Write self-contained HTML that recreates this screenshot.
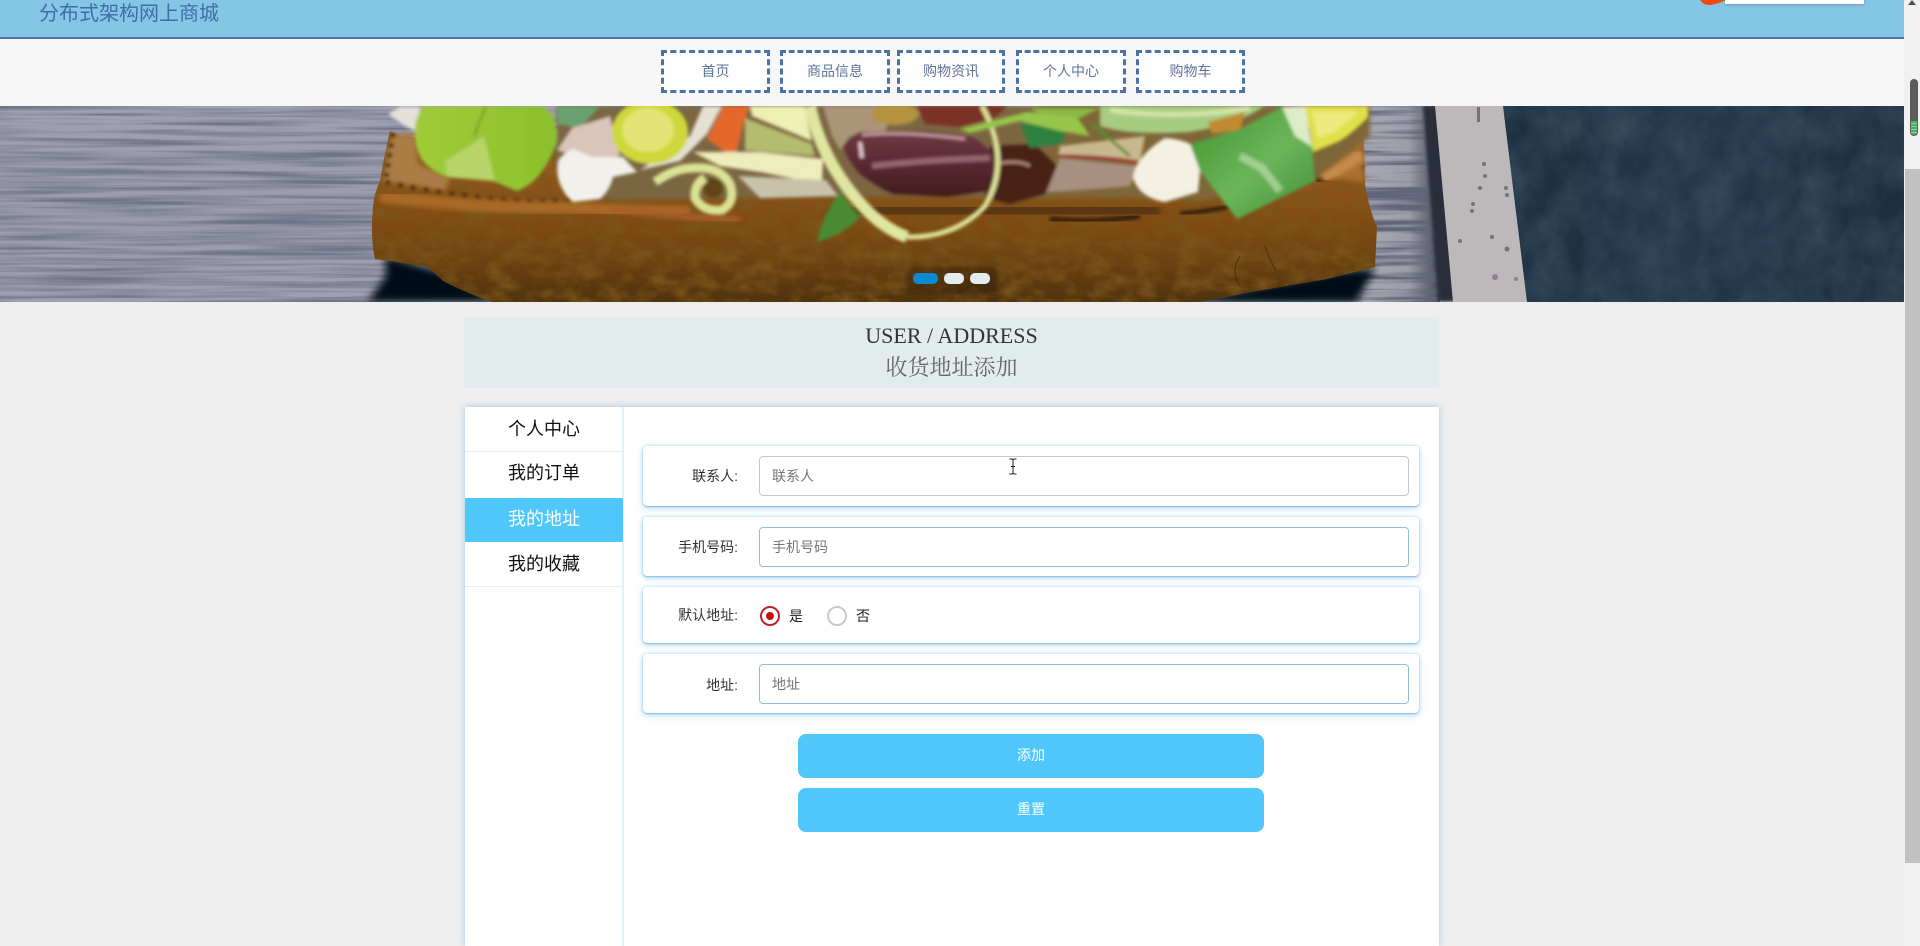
<!DOCTYPE html>
<html lang="zh-CN">
<head>
<meta charset="utf-8">
<title>收货地址添加</title>
<style>
html,body{margin:0;padding:0;width:1920px;height:946px;overflow:hidden;background:#eeeeee;font-family:"Liberation Sans","Noto Sans CJK SC",sans-serif;color:#333}
*{box-sizing:border-box}
#page{position:relative;width:1920px;height:946px;overflow:hidden}
.a{position:absolute}
#hdr{left:0;top:0;width:1904px;height:39px;background:#85c5e6;border-bottom:2px solid #4a78ad}
#hdr .t{position:absolute;left:39px;top:0;font-size:20px;line-height:28px;color:#3f6ea6;white-space:nowrap}
#nav{left:0;top:39px;width:1904px;height:67px;background:#f6f6f6}
.n{position:absolute;top:50px;height:43px;border:3px dashed #4a72a5;background:#fdfdfd;color:#5f7499;font-size:14px;line-height:37px;text-align:center;white-space:nowrap}
#band{left:464px;top:317px;width:975px;height:71px;background:#e2ecec;text-align:center;font-family:"Liberation Serif","Noto Serif CJK SC",serif;font-size:22px;line-height:31px;padding-top:3px}
#band div:first-child{color:#333}
#band div:last-child{color:#666;margin-top:1px}
#card{left:465px;top:407px;width:974px;height:539px;background:#fff;box-shadow:0 0 6px rgba(110,180,225,.65)}
#side{left:465px;top:407px;width:159px;height:539px;background:#fff;border-right:2px solid #e3f2fa}
.m{position:absolute;left:465px;width:158px;height:45px;text-align:center;font-size:18px;line-height:43px;color:#111;border-bottom:1px solid #e8eef0}
.r{position:absolute;left:643px;width:776px;background:#fff;border-radius:4px;box-shadow:0 1px 1px #8dc0dd,0 2px 7px rgba(120,190,230,.55),0 0 3px rgba(120,190,230,.45)}
.l{position:absolute;left:642px;width:96px;text-align:right;font-size:14px;line-height:20px;color:#333;white-space:nowrap}
.i{position:absolute;left:759px;width:650px;height:40px;background:#fff;border:1px solid #90bcd8;border-radius:4px;font-size:14px;line-height:39px;padding-left:12px;color:#757575}
.c{position:absolute;top:606px;width:20px;height:20px;border-radius:50%;background:#fff}
.v{position:absolute;top:605px;font-size:14px;line-height:22px;color:#222}
.b{position:absolute;left:798px;width:466px;height:44px;background:#4fc7fa;border-radius:8px;color:#fff;font-size:14px;text-align:center;line-height:43px}
</style>
</head>
<body>
<div id="page">
<div class="a" id="hdr"><div class="t">分布式架构网上商城</div>
<div class="a" style="left:1725px;top:-4px;width:139px;height:8px;background:#fff;box-shadow:0 1px 2px rgba(90,110,130,.5)"></div>
<svg class="a" style="left:1699px;top:0" width="28" height="6"><path d="M1 0Q4 5 11 5Q19 4 27 0Z" fill="#f04a10"/></svg>
</div>
<div class="a" id="nav"></div>
<div class="n" style="left:661px;width:109px">首页</div>
<div class="n" style="left:780px;width:110px">商品信息</div>
<div class="n" style="left:897px;width:108px">购物资讯</div>
<div class="n" style="left:1016px;width:110px">个人中心</div>
<div class="n" style="left:1136px;width:109px">购物车</div>

<svg class="a" style="left:0;top:106px" width="1904" height="196" viewBox="0 0 1904 196">
<defs>
<filter id="wood" x="0" y="0" width="100%" height="100%">
<feTurbulence type="fractalNoise" baseFrequency="0.005 0.2" numOctaves="3" seed="4"/>
<feColorMatrix values="0 0 0 0 .16  0 0 0 0 .17  0 0 0 0 .24  2.6 0 0 0 -1"/>
</filter>
<filter id="wood2" x="0" y="0" width="100%" height="100%">
<feTurbulence type="fractalNoise" baseFrequency="0.006 0.16" numOctaves="3" seed="12"/>
<feColorMatrix values="0 0 0 0 .12  0 0 0 0 .13  0 0 0 0 .19  3.4 0 0 0 -1.3"/>
</filter>
<filter id="denim" x="0" y="0" width="100%" height="100%">
<feTurbulence type="fractalNoise" baseFrequency="0.03 0.025" numOctaves="4" seed="9"/>
<feColorMatrix values="0 0 0 0 .05  0 0 0 0 .09  0 0 0 0 .13  1.1 0 0 0 -.3"/>
</filter>
<filter id="crumb" x="0" y="0" width="100%" height="100%">
<feTurbulence type="fractalNoise" baseFrequency="0.045 0.07" numOctaves="3" seed="3"/>
<feColorMatrix values="0 0 0 0 .2  0 0 0 0 .09  0 0 0 0 .01  2 0 0 0 -.75"/>
<feComposite operator="in" in2="SourceAlpha"/>
</filter>
<filter id="b1" x="-5%" y="-5%" width="110%" height="110%"><feGaussianBlur stdDeviation="1.700"/></filter>
<filter id="b2"><feGaussianBlur stdDeviation="2.500"/></filter>
<filter id="b4"><feGaussianBlur stdDeviation="4"/></filter>
<linearGradient id="w" x1="0" y1="0" x2="0" y2="1"><stop offset="0" stop-color="#9fa1b2"/><stop offset=".6" stop-color="#9a9bae"/><stop offset="1" stop-color="#a0a0b2"/></linearGradient>
<linearGradient id="w2" x1="0" y1="0" x2="1" y2="0"><stop offset="0" stop-color="#a8a9b4"/><stop offset=".6" stop-color="#9c9da8"/><stop offset="1" stop-color="#454855"/></linearGradient>
<linearGradient id="br" x1="0" y1="0" x2="0" y2="1"><stop offset="0" stop-color="#9a6426"/><stop offset=".5" stop-color="#824c14"/><stop offset=".72" stop-color="#704412"/><stop offset="1" stop-color="#4f330e"/></linearGradient>
<linearGradient id="dn" x1="0" y1="0" x2="1" y2="0"><stop offset="0" stop-color="#1b2f40"/><stop offset=".5" stop-color="#22374a"/><stop offset="1" stop-color="#1c2f3f"/></linearGradient>
<linearGradient id="ol" x1="0" y1="0" x2="0" y2="1"><stop offset="0" stop-color="#6e3a45"/><stop offset=".45" stop-color="#5c2a35"/><stop offset="1" stop-color="#421c1c"/></linearGradient>
<linearGradient id="fv" x1="0" y1="0" x2="1" y2="0"><stop offset="0" stop-color="#a0cb3a"/><stop offset="1" stop-color="#8cc02c"/></linearGradient>
<linearGradient id="lf" x1="0" y1="0" x2="1" y2="1"><stop offset="0" stop-color="#3f962f"/><stop offset=".55" stop-color="#6cb45a"/><stop offset="1" stop-color="#3f9036"/></linearGradient>
</defs>

<!-- table / wood -->
<rect width="1370" height="196" fill="url(#w)"/>
<rect width="1370" height="196" filter="url(#wood)"/>
<rect x="1362" y="0" width="78" height="196" fill="url(#w2)"/>
<rect x="1362" y="0" width="78" height="196" filter="url(#wood2)"/>

<!-- denim -->
<rect x="1495" width="409" height="196" fill="url(#dn)"/>
<rect x="1495" width="409" height="196" filter="url(#denim)"/>

<!-- knife -->
<path d="M1423 0H1438L1456 196H1438Z" fill="#2c2f3b" filter="url(#b1)"/>
<path d="M1435 0H1503L1527 196H1453Z" fill="#bdb9ba"/>
<g fill="#5f5a66" opacity=".75">
<rect x="1477" y="1" width="3" height="15"/>
<circle cx="1484" cy="58" r="2"/><circle cx="1485" cy="70" r="2"/><circle cx="1480" cy="82" r="2"/><circle cx="1506" cy="82" r="2"/><circle cx="1507" cy="89" r="2"/><circle cx="1473" cy="98" r="2"/><circle cx="1472" cy="105" r="2"/><circle cx="1460" cy="135" r="2"/><circle cx="1492" cy="131" r="2"/><circle cx="1507" cy="143" r="2.500"/><circle cx="1495" cy="171" r="3" fill="#8a6880"/><circle cx="1516" cy="173" r="2" fill="#8a6880"/>
</g>

<!-- shadows beneath bread -->
<path d="M385 150L440 165L500 196H368L386 170Z" fill="#050812" filter="url(#b4)"/>
<path d="M1180 196L1340 165L1376 162L1356 196Z" fill="#050816" filter="url(#b4)"/>

<!-- bread -->
<path d="M390 25Q384 50 380 75Q374 88 373 101Q370 130 375 153Q402 156 427 161Q436 168 443 175Q468 188 493 196H1200Q1225 192 1240 188L1327 173L1375 161L1377 121Q1368 100 1365 78L1363 25Q1300 30 1200 60L800 60L400 30Z" fill="url(#br)"/>
<path d="M390 25Q384 50 380 75Q374 88 373 101Q370 130 375 153Q402 156 427 161Q436 168 443 175Q468 188 493 196H1200Q1225 192 1240 188L1327 173L1375 161L1377 121Q1368 100 1365 78L1363 25Q1300 30 1200 60L800 60L400 30Z" filter="url(#crumb)"/>
<!-- toast surface left -->
<path d="M392 28L383 75Q420 80 445 85L450 72L418 58L415 28Z" fill="#ab7c45" filter="url(#b2)"/>
<g fill="none" stroke="#2e1a0c" filter="url(#b1)">
<path d="M393 28L386 72" stroke-width="4" stroke-dasharray="3 7"/>
<path d="M386 76Q420 84 470 90Q520 98 570 94" stroke-width="3" stroke-dasharray="4 9"/>
</g>
<!-- crust -->
<path d="M380 90Q470 102 575 102Q640 106 690 106" fill="none" stroke="#b06e2c" stroke-width="12" opacity=".85" filter="url(#b2)"/>
<path d="M760 106H825" fill="none" stroke="#b87838" stroke-width="24" opacity=".9" filter="url(#b4)"/>
<path d="M610 102Q660 110 740 114" fill="none" stroke="#a85f2c" stroke-width="6" filter="url(#b2)"/>
<path d="M830 107Q1000 110 1160 102" fill="none" stroke="#5a3712" stroke-width="26" filter="url(#b4)"/>
<path d="M1050 113Q1090 118 1140 110" fill="none" stroke="#3a2010" stroke-width="6" filter="url(#b1)"/>
<path d="M1152 106H1182" fill="none" stroke="#1c1820" stroke-width="8" filter="url(#b1)"/>
<path d="M1180 108Q1210 105 1230 100" fill="none" stroke="#3a2410" stroke-width="5" filter="url(#b1)"/>
<path d="M1316 75L1364 60" fill="none" stroke="#3a2410" stroke-width="4" filter="url(#b1)"/>
<path d="M1318 32L1362 28L1364 76L1320 70Z" fill="#a87030" filter="url(#b2)"/>
<path d="M1322 72Q1345 60 1362 48" fill="none" stroke="#c88a4a" stroke-width="12" filter="url(#b2)"/>
<path d="M1240 150Q1230 165 1240 180M1265 140Q1270 155 1276 165" fill="none" stroke="#3c2408" stroke-width="1.500" opacity=".5"/>

<!-- background topping fill -->
<path d="M557 0H1100V50L1050 92L830 90L620 94Q560 90 555 50Z" fill="#7c6642" filter="url(#b2)"/>
<path d="M1040 0H1370V30L1320 70L1200 95L1130 92L1050 92Z" fill="#7f6638" filter="url(#b2)"/>

<g filter="url(#b1)">
<!-- left pale bit -->
<path d="M388 8L400 1H420L417 26L405 20Z" fill="#e4e0da"/>
<!-- fava bean -->
<path d="M423 0Q413 15 415 31Q416 45 423 55Q432 66 447 71L493 75Q505 80 517 85Q530 80 540 68Q552 52 557 35Q557 18 552 8L542 0Z" fill="url(#fv)"/>
<path d="M447 71L445 55Q470 40 484 30L495 75Z" fill="#b8d468"/>
<path d="M486 0L474 30" stroke="#5f8a22" stroke-width="1.500" fill="none"/>
<!-- herb + pink slice -->
<path d="M557 0H600L580 22L557 18Z" fill="#6aa070"/>
<path d="M572 22L610 10L620 50L590 56L557 44Z" fill="#d9c5ba"/>
<!-- cream crescent behind yellow slice -->
<path d="M703 0H722L707 28L680 55L640 64L690 30Z" fill="#e6e0d2"/>
<!-- cheese -->
<path d="M573 43Q562 48 558 55Q556 68 560 78Q565 90 573 96L600 93Q610 84 613 71L637 66L623 51L593 51Z" fill="#f2f0ea"/>
<!-- yellow slice -->
<ellipse cx="650" cy="26" rx="38" ry="32" fill="#cdd83a"/>
<ellipse cx="648" cy="24" rx="26" ry="22" fill="#e0e474"/>
<!-- carrot -->
<path d="M723 0H750L743 18L735 53L707 33Z" fill="#e4682a"/>
<!-- celery -->
<path d="M750 0H804L812 35L752 10Z" fill="#eef0b4"/>
<path d="M745 12L812 38L815 50L745 44Z" fill="#b4bc6e"/>
<!-- pale strip -->
<path d="M693 46L760 46L823 53L822 78L760 66L720 60Z" fill="#eeeebc"/>
<path d="M738 70L826 74L838 90L760 92Z" fill="#c9c2ab"/>
<!-- tan bits -->
<path d="M823 0H895L885 26L850 30L840 44L832 30Z" fill="#ab9478"/>
<ellipse cx="895" cy="8" rx="24" ry="11" fill="#b39340"/>
<path d="M917 0H1007L995 12L960 21L925 18Z" fill="#7a3028"/>
<!-- ring -->
<ellipse cx="713" cy="82" rx="10" ry="10" fill="#5e4516"/>
<path d="M655 76Q675 62 693 62Q720 60 730 78Q736 96 722 104Q703 106 695 92Q694 78 705 72" fill="none" stroke="#dae294" stroke-width="9"/>
<!-- second olive -->
<path d="M990 40L1035 38L1057 60L1045 88L1010 98L985 92Z" fill="#4a2418"/>
<path d="M1000 57Q1020 54 1030 60" stroke="#b08878" stroke-width="3" fill="none"/>
<!-- olive -->
<path d="M843 41Q850 30 860 26L927 25L973 31Q990 42 997 55Q995 72 987 85L947 91L893 88Q875 80 860 68Q848 55 843 41Z" fill="url(#ol)"/>
<path d="M862 29Q905 25 965 33" stroke="#c49aa2" stroke-width="3" fill="none"/>
<path d="M872 60Q925 54 990 52" stroke="#a87a82" stroke-width="6" fill="none" opacity=".75"/>
<path d="M860 36L862 52" stroke="#e0c4c8" stroke-width="4" fill="none"/>
<!-- small leaf -->
<path d="M840 86Q822 110 817 136Q845 128 860 111Z" fill="#4a8a30"/>
<!-- ribbon -->
<path d="M810 0Q822 55 860 97Q882 122 907 131" fill="none" stroke="#dfe6a0" stroke-width="12"/>
<path d="M907 131Q955 132 985 100Q1012 55 982 0" fill="none" stroke="#dde29a" stroke-width="5"/>
<!-- radish -->
<path d="M1060 40L1145 30L1140 55L1058 50Z" fill="#c8b88e"/>
<path d="M1047 86L1060 52L1137 60L1130 80Q1090 84 1047 86Z" fill="#a89080"/>
<path d="M1058 50Q1100 50 1138 56" stroke="#a02828" stroke-width="3" fill="none"/>
<!-- micro greens -->
<path d="M1020 18L1068 20L1062 38L1030 42Z" fill="#2f8040"/>
<path d="M960 23L1027 6L1077 11L1090 30L1060 25L1020 15L970 27Z" fill="#96c648"/>
<path d="M1030 2H1100L1080 12L1040 8Z" fill="#8ab844"/>
<path d="M1092 18L1130 50" stroke="#5a9030" stroke-width="3" fill="none"/>
<!-- bright ring -->
<path d="M1100 0H1264Q1240 18 1190 26Q1130 30 1100 20Z" fill="#a6cc82"/>
<path d="M1110 4Q1180 14 1250 2" stroke="#d4e4aa" stroke-width="5" fill="none"/>
<!-- tan near leaf -->
<path d="M1208 16L1245 6L1240 24L1212 28Z" fill="#c08a30"/>
<!-- lime -->
<path d="M1303 0H1368V11Q1355 25 1340 35L1313 46L1310 25Z" fill="#dfe04c"/>
<path d="M1312 6H1358L1335 26L1318 32Z" fill="#f0e97e"/>
<!-- big leaf -->
<path d="M1190 38L1200 65L1237 113L1315 75L1312 41L1282 1L1240 23Z" fill="url(#lf)"/>
<path d="M1282 1L1305 0L1312 41L1295 30Z" fill="#dcecc8"/>
<path d="M1240 50L1262 62L1280 85" stroke="#c0e0b0" stroke-width="8" fill="none" opacity=".65"/>
<!-- cheese -->
<path d="M1165 32Q1180 33 1190 38L1200 65L1198 86L1165 96Q1140 92 1133 72Q1136 50 1165 32Z" fill="#f4f1e2"/>
</g>

<!-- indicator -->
<rect x="907" y="161" width="90" height="27" rx="7" fill="#000" opacity=".22" filter="url(#b1)"/>
<rect x="913" y="167" width="25" height="11" rx="5" fill="#0a8ad0"/>
<rect x="944" y="167" width="20" height="11" rx="5" fill="#e2ebee"/>
<rect x="970" y="167" width="20" height="11" rx="5" fill="#e2ebee"/>
</svg>

<div class="a" id="band"><div>USER / ADDRESS</div><div>收货地址添加</div></div>

<div class="a" id="card"></div>
<div class="a" id="side"></div>
<div class="m" style="top:407px;line-height:44px">个人中心</div>
<div class="m" style="top:452px;height:46px;line-height:42px;border-bottom:0">我的订单</div>
<div class="m" style="top:498px;height:44px;background:#4fc7fa;color:#fff;border-bottom:0">我的地址</div>
<div class="m" style="top:542px;line-height:44px">我的收藏</div>

<div class="r" style="top:446px;height:60px"></div>
<div class="r" style="top:517px;height:59px"></div>
<div class="r" style="top:587px;height:56px"></div>
<div class="r" style="top:654px;height:59px"></div>

<div class="l" style="top:466px">联系人:</div>
<div class="i" style="top:456px;border-color:#c4c8cc">联系人</div>
<div class="l" style="top:537px">手机号码:</div>
<div class="i" style="top:527px">手机号码</div>
<div class="l" style="top:605px">默认地址:</div>
<div class="c" style="left:760px;border:2px solid #b8262a"></div>
<div class="a" style="left:766px;top:612px;width:8px;height:8px;border-radius:50%;background:#cc0a0a"></div>
<div class="v" style="left:789px">是</div>
<div class="c" style="left:827px;border:2px solid #c9c9c9"></div>
<div class="v" style="left:856px">否</div>
<div class="l" style="top:675px">地址:</div>
<div class="i" style="top:664px">地址</div>

<div class="b" style="top:734px">添加</div>
<div class="b" style="top:788px">重置</div>

<svg class="a" style="left:1008px;top:458px" width="10" height="17"><path d="M1.500 1H4L5 2L6 1H8.500M5 2V15M1.500 16H4L5 15L6 16H8.500M3 8.500H7" fill="none" stroke="#222" stroke-width="1"/></svg>

<!-- scrollbar -->
<div class="a" style="left:1904px;top:0;width:16px;height:946px;background:#f1f1f1"></div>
<div class="a" style="left:1905px;top:169px;width:15px;height:694px;background:#c1c1c1"></div>
<svg class="a" style="left:1907px;top:0" width="10" height="5"><path d="M1 5L5 0L9 5Z" fill="#505050"/></svg>
<div class="a" style="left:1910px;top:79px;width:8px;height:57px;border-radius:4px;background:#5c5c5c"></div>
<div class="a" style="left:1911px;top:121px;width:6px;height:14px;border-radius:0 0 3px 3px;background:repeating-linear-gradient(#4caf62 0 2px,#8fd09a 2px 3px)"></div>
</div>
</body>
</html>
